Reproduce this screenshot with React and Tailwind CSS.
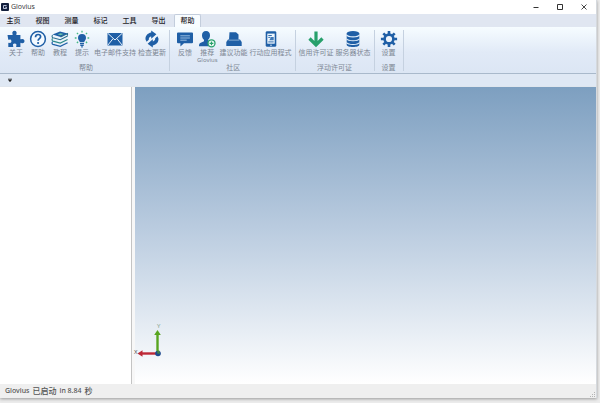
import React from 'react';

const BLUE = '#1f5fa6';
const GREEN = '#27a06b';

function Svg({ children, width = 18 }) {
  return (
    <svg width={width} height="18" viewBox={`0 0 ${width} 18`} fill="none" aria-hidden="true">
      {children}
    </svg>
  );
}

const PuzzleIcon = () => (
  <Svg>
    <path
      d="M.5 5h4.700c.6 0 .7-.4.400-.9C4.800 2.700 5.600.8 7.500.8s2.700 1.900 1.900 3.300c-.3.500-.2.900.4.900h3.600v3.800c0 .6.4.700.9.4 1.300-.8 3.200 0 3.200 1.900s-1.900 2.700-3.200 1.900c-.5-.3-.9-.2-.9.4V17H9.600c-.6 0-.7-.4-.4-.9.7-1.200.1-2.500-1.500-2.500s-2.200 1.300-1.500 2.500c.3.500.2.900-.4.900H1.300v-3.800c0-.6.4-.7.900-.4 1.100.6 2.200 0 2.200-1.500S3.300 9.100 2.200 9.700c-.5.300-.9.200-1-.4z"
      fill={BLUE}
    />
  </Svg>
);

const HelpIcon = () => (
  <Svg>
    <circle cx="9" cy="9" r="7.400" stroke={BLUE} strokeWidth="1.500" fill="#f4faff" />
    <path d="M6.500 7.200c0-1.700 1.100-2.700 2.600-2.700s2.500 1 2.500 2.300c0 1.800-2.500 2-2.500 4" stroke={BLUE} strokeWidth="1.700" />
    <circle cx="9.100" cy="13" r="1.100" fill={BLUE} />
  </Svg>
);

const BooksIcon = () => (
  <Svg>
    <path d="M1.500 4.600 9 1.400l7.600 2-7 3.600z" fill={BLUE} />
    <path d="m6.500 4.300 3-1.100 3 .8-3 1.300z" fill="#6cc5a8" />
    <path d="M1.600 5c-.9 1-.6 2.400.4 2.700l7.300 2 7.300-3.600M9.500 7l7-3.400v2" stroke="#2b6f8d" strokeWidth="1.100" />
    <path d="M1.600 8.400c-.9 1-.6 2.400.4 2.700l7.300 2 7.300-3.600" stroke="#2c8a8a" strokeWidth="1.200" />
    <path d="M1.600 11.700c-.9 1-.6 2.400.4 2.700l7.300 2 7.300-3.600" stroke={BLUE} strokeWidth="1.200" />
  </Svg>
);

const BulbIcon = () => (
  <Svg>
    <path d="M9 4a4 4 0 0 0-4 4c0 1.800 1.500 2.600 1.900 4.300h4.200C11.500 10.600 13 9.800 13 8a4 4 0 0 0-4-4z" fill={BLUE} />
    <path d="M7 13.700h4M7.300 15.400h3.400M8.200 16.800h1.600" stroke={BLUE} strokeWidth="1.200" />
    <path d="M9 .8v1.700M3.900 2.900l1.200 1.200M14.100 2.900l-1.200 1.200M1.800 8h1.700M14.500 8h1.700M3.900 13l1.200-1.200M14.100 13l-1.200-1.200" stroke="#45b886" strokeWidth="1.300" />
  </Svg>
);

const MailIcon = () => (
  <Svg>
    <path d="M1.500 3h15v12.500h-15z" fill={BLUE} />
    <path d="m1.800 3.300 7.200 6.700 7.200-6.700M1.800 15.200l5.200-6.500M16.200 15.200 11 8.700" stroke="#e6f1fb" strokeWidth="1" />
  </Svg>
);

const RefreshIcon = () => (
  <Svg>
    <path d="M8.200.5v2C4.600 3.200 2 6 2.600 9.700l1 2.100 2.200-2.100c-.1-1.800.8-2.800 2.400-3.100v2.200l5.200-4.500z" fill={BLUE} />
    <path d="M9.800 17.500v-2c3.600-.7 6.200-3.500 5.600-7.200l-1-2.100-2.200 2.100c.1 1.800-.8 2.800-2.400 3.100V9.200l-5.200 4.500z" fill={BLUE} />
  </Svg>
);

const CommentIcon = () => (
  <Svg>
    <path d="M2 2.500h14a1 1 0 0 1 1 1v8.700a1 1 0 0 1-1 1H8l-3.600 3.200v-3.200H2a1 1 0 0 1-1-1V3.500a1 1 0 0 1 1-1z" fill={BLUE} />
    <path d="M4.300 5.800h9.600M4.300 8h9.600M4.300 10.200h6.400" stroke="#a9c8e6" strokeWidth=".9" />
  </Svg>
);

const UserAddIcon = () => (
  <Svg>
    <path d="M8 1C5.400 1 4 2.800 4 5.200c0 2 .8 3.600 2 4.500v1.500L2.300 13C1.200 13.600 1 14.800 1 16.300h10.300L12.500 11l-2.400-.5v-.8c1.100-.9 1.900-2.500 1.900-4.500C12 2.800 10.600 1 8 1z" fill={BLUE} />
    <circle cx="13.500" cy="13.300" r="3.500" fill="#f2fbf7" stroke={GREEN} strokeWidth="1.300" />
    <path d="M13.500 11.400v3.800M11.600 13.300h3.800" stroke={GREEN} strokeWidth="1.200" />
  </Svg>
);

const SuggestIcon = () => (
  <Svg>
    <path d="M4.500 2.300h6.500l2.500 2.300v5.200H4z" fill={BLUE} />
    <path d="M3 9.500 1.300 12v4h15.400v-4L15 9.500z" fill={BLUE} />
    <path d="M3.600 10.300h10.800" stroke="#8fb3d9" strokeWidth=".7" />
  </Svg>
);

const MobileIcon = () => (
  <Svg>
    <rect x="3.700" y="1.200" width="10.600" height="15.600" rx="1.400" fill={BLUE} />
    <path d="M5.300 3.600h7.400v10.100H5.300z" fill="#eef7fd" />
    <path d="M6.300 5.500h3.500M6.300 7.400h2.200M6.300 11.900h5.400" stroke={BLUE} strokeWidth=".9" />
    <path d="M9 7h2.700v3.300H7.300z" fill="#3f79b8" />
    <circle cx="9" cy="15.300" r=".7" fill="#eef7fd" />
  </Svg>
);

const DownIcon = () => (
  <Svg>
    <path d="M9 1.500v13M2.500 8.500 9 15l6.500-6.500" stroke={GREEN} strokeWidth="3.200" />
  </Svg>
);

const ServerIcon = () => (
  <Svg>
    <path d="M2.700 3.300v11.400c0 1.300 2.800 2.300 6.300 2.300s6.300-1 6.300-2.300V3.300z" fill={BLUE} />
    <ellipse cx="9" cy="3.200" rx="6.300" ry="2.200" fill={BLUE} />
    <path d="M2.500 4.900c1 1.500 3.300 2 6.500 2s5.500-.5 6.500-2M2.500 8.700c1 1.500 3.300 2 6.500 2s5.500-.5 6.500-2M2.500 12.500c1 1.500 3.300 2 6.500 2s5.500-.5 6.500-2" stroke="#e3effa" strokeWidth="1.100" />
  </Svg>
);

const GearIcon = () => (
  <Svg>
    <circle cx="9" cy="9" r="4.400" stroke={BLUE} strokeWidth="2.600" />
    <path d="M9 .9v3M9 14.100v3M.9 9h3M14.100 9h3M3.300 3.300l2.100 2.100M12.600 12.600l2.100 2.100M3.300 14.700l2.100-2.100M12.600 5.400l2.100-2.100" stroke={BLUE} strokeWidth="2.600" />
  </Svg>
);

const GROUPS = [
  {
    title: '帮助',
    pad: 'pl-[5px] pr-0.5',
    items: [
      { label: '关于', Icon: PuzzleIcon },
      { label: '帮助', Icon: HelpIcon },
      { label: '教程', Icon: BooksIcon },
      { label: '提示', Icon: BulbIcon },
      { label: '电子邮件支持', Icon: MailIcon },
      { label: '检查更新', Icon: RefreshIcon },
    ],
  },
  {
    title: '社区',
    pad: 'pl-1 pr-0.5',
    items: [
      { label: '反馈', Icon: CommentIcon },
      { label: '推荐', sub: 'Glovius', Icon: UserAddIcon },
      { label: '建议功能', Icon: SuggestIcon },
      { label: '行动应用程式', Icon: MobileIcon },
    ],
  },
  {
    title: '浮动许可证',
    pad: 'px-0.5',
    items: [
      { label: '信用许可证', Icon: DownIcon },
      { label: '服务器状态', Icon: ServerIcon },
    ],
  },
  { title: '设置', pad: 'px-[3px]', items: [{ label: '设置', Icon: GearIcon }] },
];

const TABS = ['主页', '视图', '测量', '标记', '工具', '导出', '帮助'];

function TitleBar() {
  return (
    <header className="flex h-3.5 shrink-0 items-center bg-white pl-px">
      <svg width="8" height="8" viewBox="0 0 8 8" aria-hidden="true">
        <rect width="8" height="8" rx="1" fill="#14203d" />
        <path d="M5.600 2.500H2.500v3h3V4.200H4.200" fill="none" stroke="#c9d3ea" strokeWidth=".9" />
      </svg>
      <h1 className="ml-0.5 flex-1 font-['Open_Sans',sans-serif] text-[7px] leading-[10px] text-[#333]">Glovius</h1>
      <div className="flex">
        <button aria-label="最小化" className="flex h-3.5 w-6 items-center justify-center">
          <svg width="6" height="6" viewBox="0 0 6 6"><path d="M.5 3.500h5" stroke="#333" /></svg>
        </button>
        <button aria-label="最大化" className="flex h-3.5 w-6 items-center justify-center">
          <svg width="6" height="6" viewBox="0 0 6 6"><path d="M.5.500h5v5h-5z" fill="none" stroke="#333" /></svg>
        </button>
        <button aria-label="关闭" className="flex h-3.5 w-6 items-center justify-center">
          <svg width="6" height="6" viewBox="0 0 6 6"><path d="m.5.500 5 5m0-5-5 5" stroke="#333" strokeWidth=".9" /></svg>
        </button>
      </div>
    </header>
  );
}

function Tabs() {
  return (
    <nav role="tablist" className="flex h-[13px] shrink-0 gap-0.5 bg-[#e0e6f1]">
      {TABS.map((tab, i) => {
        const active = i === TABS.length - 1;
        return (
          <button
            key={tab}
            role="tab"
            aria-selected={active}
            className={
              'flex h-full w-[27px] items-center justify-center border border-b-0 text-[7px] leading-[10px] font-medium text-[#1d2127] ' +
              (active ? 'rounded-t-xs border-[#c3cddc] bg-[#f8fcff]' : 'border-transparent')
            }
          >
            {tab}
          </button>
        );
      })}
    </nav>
  );
}

function Ribbon() {
  return (
    <div className="flex h-[47px] shrink-0 border-b border-[#a9b9cb] bg-linear-to-b from-[#f6fcff] via-[#e1eaf7] via-55% to-[#dce6f4]">
      {GROUPS.map((group, i) => (
        <section key={i} aria-label={group.title} className="flex">
          <div className={'flex flex-col justify-between ' + group.pad}>
            <div className="flex">
              {group.items.map(({ label, sub, Icon }) => (
                <button key={label} className="flex min-w-[22px] flex-col items-center px-px pt-[3px] text-[7px] text-[#7d8794]">
                  <span className="flex h-[18px] items-center"><Icon /></span>
                  <span className="leading-[9px] whitespace-nowrap">{label}</span>
                  {sub && <span className="text-[6px] leading-[6px]">{sub}</span>}
                </button>
              ))}
            </div>
            <h2 className="text-center text-[7px] leading-[10px] text-[#7d8794]">{group.title}</h2>
          </div>
          <div className="mt-[3px] mb-0.5 w-px bg-[#c5d1e0]" />
        </section>
      ))}
    </div>
  );
}

function AxisTriad() {
  return (
    <svg className="absolute bottom-6 left-0" width="32" height="40" viewBox="0 0 32 40" role="img" aria-label="坐标轴">
      <path d="M22.500 33V14" stroke="#58a520" strokeWidth="2.400" />
      <path d="m22.500 10-3.300 5h6.600z" fill="#58a520" />
      <path d="M22 33.500H6" stroke="#bd2836" strokeWidth="2.400" />
      <path d="m2.500 33.500 5-3.300v6.600z" fill="#bd2836" />
      <circle cx="23" cy="33.500" r="2.800" fill="#1e4a8e" />
      <path d="M22 31h2.500l-2 2h2.500" stroke="#58a520" fill="none" strokeWidth=".8" />
    </svg>
  );
}

function Viewport() {
  return (
    <main className="relative flex-1 bg-linear-to-b from-[#7d9fc0] via-[#b9cbdf] via-47% to-white">
      <AxisTriad />
      <span className="absolute bottom-[54px] left-[22px] text-[6px] leading-2 text-[#8aa592]">Y</span>
      <span className="absolute bottom-7 -left-px text-[6px] leading-2 text-[#555]">X</span>
    </main>
  );
}

export default function App() {
  return (
    <div className="flex h-screen bg-[#ececec] pr-[3px] pb-[5px] font-['Noto_Sans','Noto_Sans_CJK_SC',sans-serif]">
      <div className="flex min-w-0 flex-1 flex-col border-r border-[#d5d9de] bg-white shadow-[0_1px_3px_#999]">
        <TitleBar />
        <Tabs />
        <Ribbon />
        <div className="flex h-[13px] shrink-0 items-center border-b border-[#dfe6ee] bg-[#dfe8f4] pl-2">
          <button aria-label="自定义快速访问工具栏" className="flex size-1">
            <svg width="4" height="4" viewBox="0 0 4 4"><path d="M0 .4h4M0 1.500h4L2 4z" fill="#222" stroke="#222" strokeWidth=".3" /></svg>
          </button>
        </div>
        <div className="flex min-h-0 flex-1">
          <aside className="w-[22%] bg-white" />
          <div className="w-1 border-l border-[#c4c4c4] bg-[#f7f7f7]" />
          <Viewport />
        </div>
        <footer className="flex h-3.5 shrink-0 items-center justify-between bg-[#efefef] pl-[5px]">
          <p className="flex items-center gap-[3px] text-[7px] leading-[10px] font-medium text-[#555]">
            <span>Glovius</span>
            <span className="text-[8px]">已启动</span>
            <span>in 8.84</span>
            <span className="text-[8px]">秒</span>
          </p>
          <svg className="self-end" width="7" height="7" viewBox="0 0 7 7" aria-hidden="true">
            <path d="M5 1h1v1H5zM3 3h1v1H3zM5 3h1v1H5zM1 5h1v1H1zM3 5h1v1H3zM5 5h1v1H5z" fill="#b5b5b5" />
          </svg>
        </footer>
      </div>
    </div>
  );
}
